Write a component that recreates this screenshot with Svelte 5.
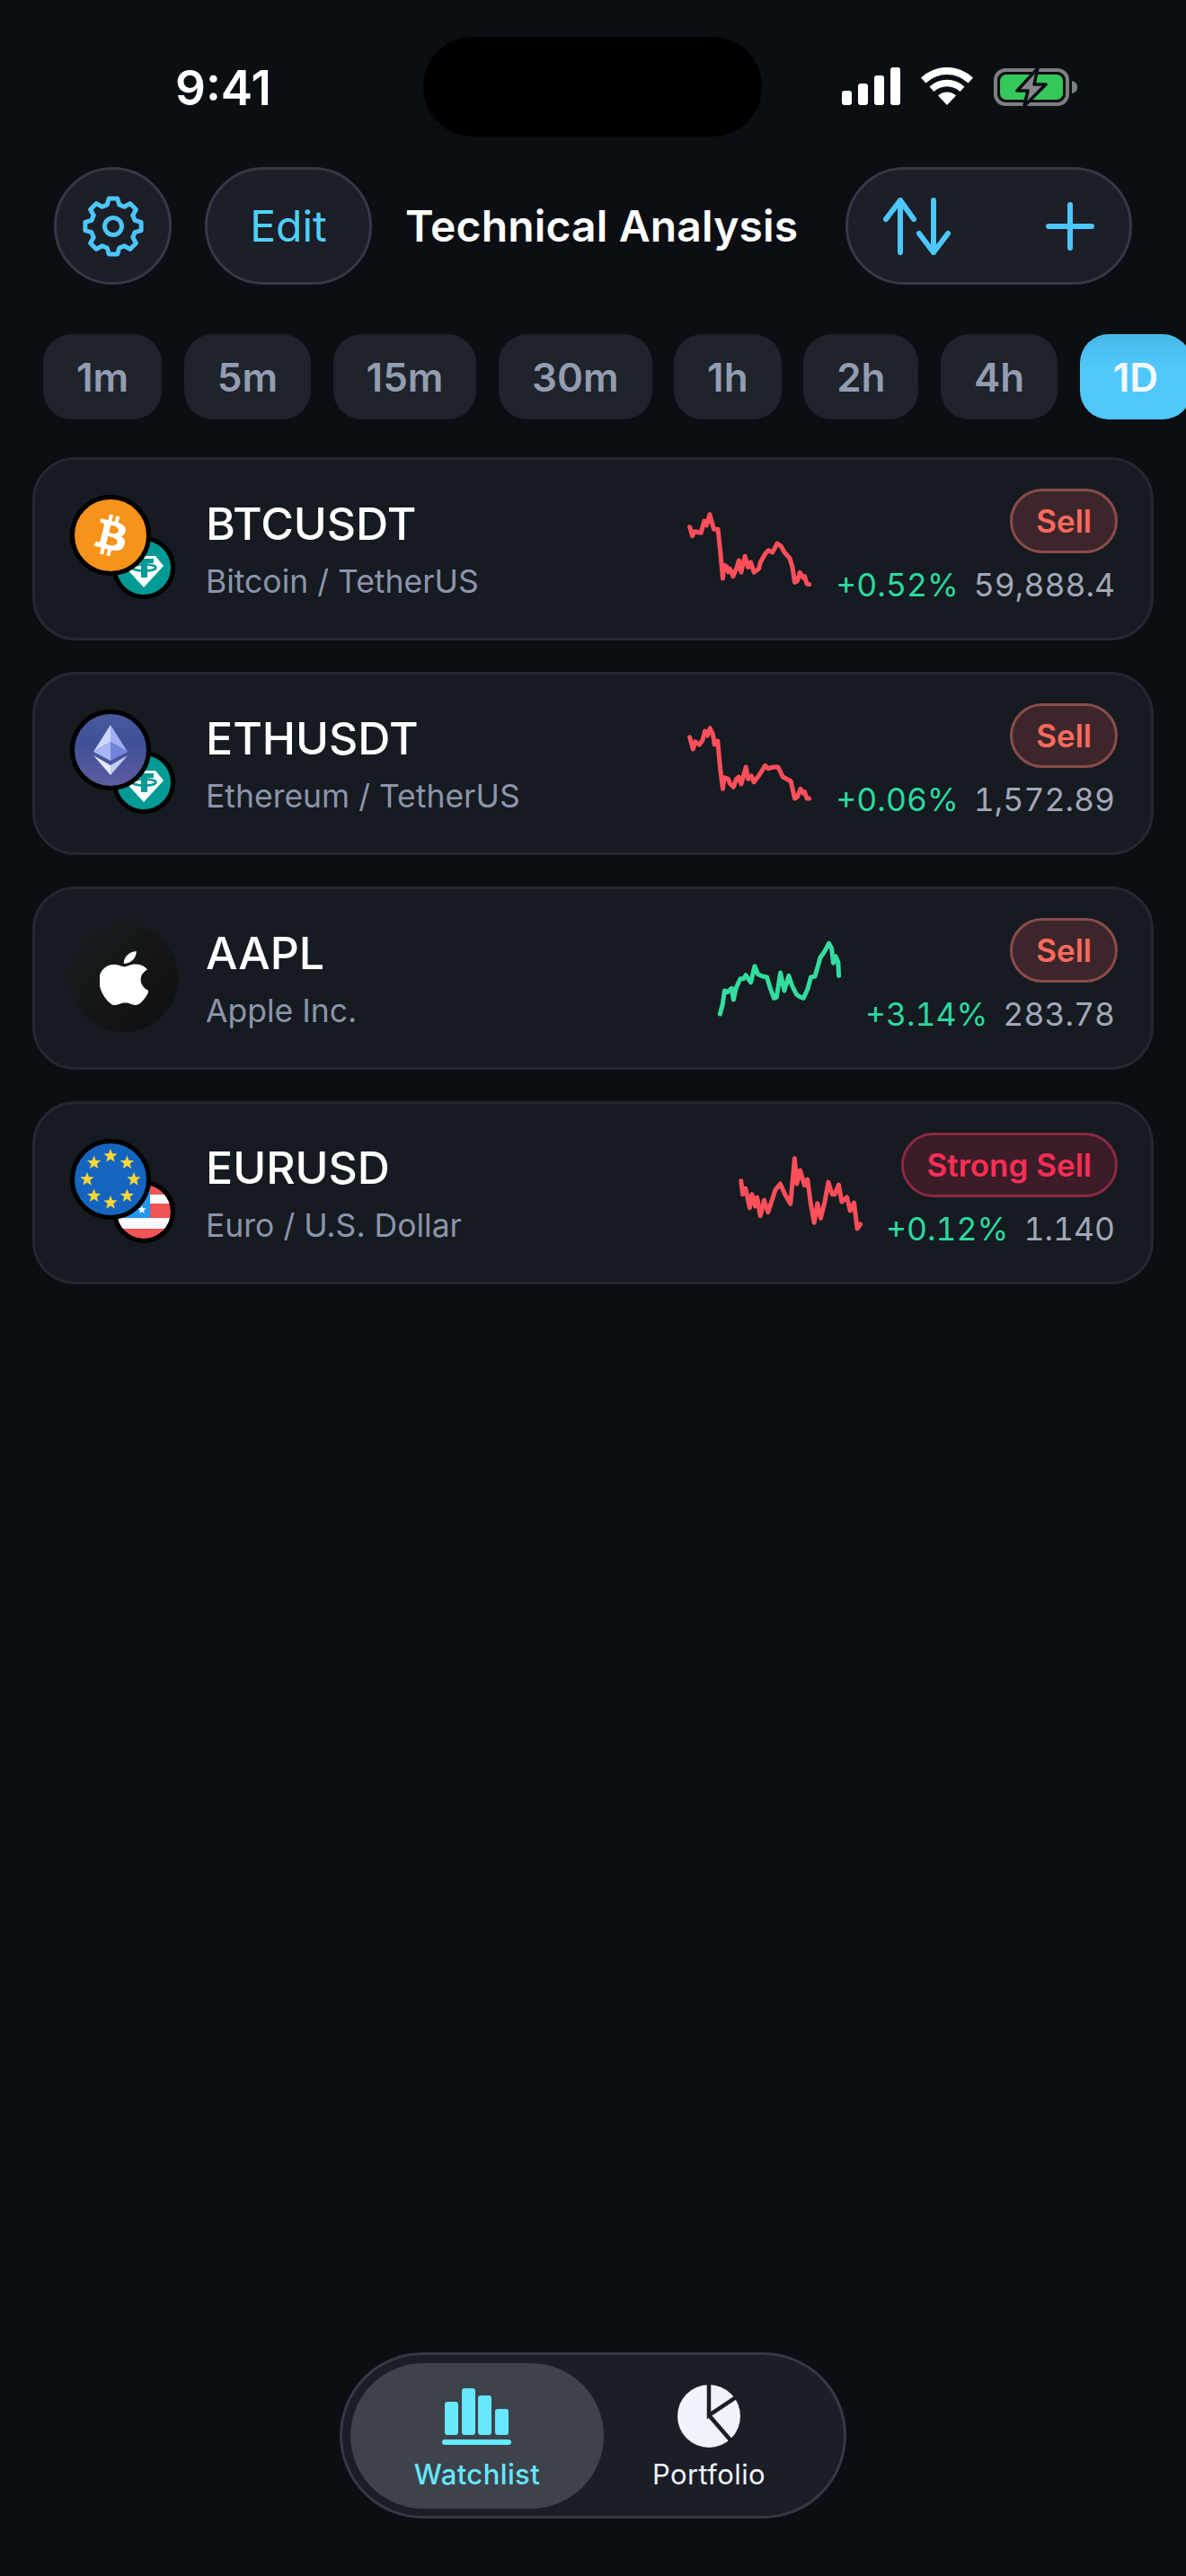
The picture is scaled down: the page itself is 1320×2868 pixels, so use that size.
<script>
	const frames = ['1m', '5m', '15m', '30m', '1h', '2h', '4h', '1D'];

	// sparkline points as traced, scaled down into the 136x84 box below
	const toPoints = (raw, ox, oy) =>
		raw.map(([x, y]) => `${((x - ox) / 2.8).toFixed(1)},${((y - oy) / 3).toFixed(1)}`).join(' ');

	const rows = [
		{
			sym: 'BTCUSDT', name: 'Bitcoin / TetherUS', icon: 'btc', tone: 'sell', signal: 'Sell', change: '+0.52%', price: '59,888.4', line: 'red',
			points: toPoints([[80,260],[88,290],[95,275],[115,280],[125,240],[132,255],[142,218],[155,268],[168,268],[175,340],[183,432],[186,388],[195,392],[200,410],[205,400],[215,425],[225,400],[233,372],[240,412],[252,358],[262,395],[270,378],[280,412],[295,400],[300,378],[315,350],[325,338],[338,345],[352,315],[365,325],[375,345],[392,365],[400,395],[407,445],[415,440],[423,412],[433,430],[438,425],[445,450],[452,452]], 78, 213)
		},
		{
			sym: 'ETHUSDT', name: 'Ethereum / TetherUS', icon: 'eth', tone: 'sell', signal: 'Sell', change: '+0.06%', price: '1,572.89', line: 'red',
			points: toPoints([[80,245],[90,285],[97,260],[110,270],[120,255],[127,225],[135,240],[143,215],[152,235],[157,270],[167,258],[175,350],[183,418],[187,380],[200,385],[205,400],[216,412],[225,385],[232,378],[240,402],[255,345],[262,385],[272,375],[280,395],[296,372],[315,340],[325,350],[340,345],[355,345],[370,378],[395,392],[407,450],[415,445],[425,418],[433,432],[438,428],[445,450],[452,450]], 78, 213)
		},
		{
			sym: 'AAPL', name: 'Apple Inc.', icon: 'aapl', tone: 'sell', signal: 'Sell', change: '+3.14%', price: '283.78', line: 'green',
			points: toPoints([[172,388],[180,355],[186,310],[195,315],[208,302],[214,340],[222,300],[235,270],[245,270],[252,258],[268,282],[280,228],[290,255],[305,262],[318,265],[328,300],[340,335],[348,332],[360,250],[372,310],[386,260],[395,290],[410,322],[420,330],[432,335],[445,305],[455,265],[468,262],[484,200],[497,180],[511,152],[520,170],[525,218],[532,195],[540,215],[542,260]], 168, 148)
		},
		{
			sym: 'EURUSD', name: 'Euro / U.S. Dollar', icon: 'eur', tone: 'strong', signal: 'Strong Sell', change: '+0.12%', price: '1.140', line: 'red',
			points: toPoints([[238,945],[243,990],[252,970],[265,1035],[272,990],[282,1030],[288,1000],[298,1062],[310,1010],[322,1050],[345,975],[360,955],[375,990],[392,1022],[405,870],[412,955],[422,910],[436,960],[445,940],[455,1020],[466,1085],[476,1020],[486,1070],[498,1020],[510,950],[522,990],[530,990],[542,958],[552,1015],[568,1000],[578,1045],[590,1018],[600,1105],[610,1090]], 233, 865)
		}
	];

	function gearPath() {
		let d = '';
		for (let i = 0; i < 8; i++) {
			const a = (i * Math.PI) / 4 - Math.PI / 2;
			const pts = [[25, -0.27], [31.5, -0.15], [31.5, 0.15], [25, 0.27]];
			for (const [r, da] of pts) {
				const x = 36 + r * Math.cos(a + da);
				const y = 36 + r * Math.sin(a + da);
				d += `${d ? 'L' : 'M'}${x.toFixed(1)} ${y.toFixed(1)}`;
			}
		}
		return d + 'Z';
	}

	function starPath(cx, cy, r) {
		let d = '';
		for (let i = 0; i < 10; i++) {
			const a = (i * Math.PI) / 5 - Math.PI / 2;
			const rr = i % 2 ? r * 0.42 : r;
			d += `${d ? 'L' : 'M'}${(cx + rr * Math.cos(a)).toFixed(1)} ${(cy + rr * Math.sin(a)).toFixed(1)}`;
		}
		return d + 'Z';
	}

	const euStars = Array.from({ length: 8 }, (_, i) => {
		const a = (i * Math.PI) / 4;
		return starPath(45 + 26 * Math.sin(a), 45 - 26 * Math.cos(a), 8);
	});
</script>

{#snippet tether()}
	<svg class="coin-b" viewBox="0 0 70 70">
		<circle cx="35" cy="35" r="32.5" fill="#029a94" stroke="#000" stroke-width="5" />
		<path d="M22 22H48L57 33L35 57L13 33Z" fill="#fff" />
		<path d="M32 26H39V46H32Z" fill="#029a94" />
		<path d="M26 25H46V30H26Z" fill="#029a94" />
		<ellipse cx="35.5" cy="35" rx="13" ry="3.5" fill="none" stroke="#029a94" stroke-width="2.5" />
	</svg>
{/snippet}

<div class="page">
	<div class="island"></div>

	<header class="status">
		<span class="time">9:41</span>
		<div class="status-icons">
			<svg width="65" height="42" viewBox="0 0 65 42" fill="#fff">
				<rect x="0" y="26" width="11" height="16" rx="3" />
				<rect x="18" y="18" width="11" height="24" rx="3" />
				<rect x="36" y="9" width="11" height="33" rx="3" />
				<rect x="54" y="0" width="11" height="42" rx="3" />
			</svg>
			<svg width="58" height="42" viewBox="0 0 58 42" fill="#fff">
				<path d="M29 42L19 31.5A14.5 14.5 0 0 1 39 31.5Z" />
				<path d="M14.5 27A21 21 0 0 1 43.5 27L48.5 21.5A28.5 28.5 0 0 0 9.5 21.5Z" />
				<path d="M5.5 17.5A34 34 0 0 1 52.5 17.5L58 11.5A42 42 0 0 0 0 11.5Z" />
			</svg>
			<svg width="94" height="44" viewBox="0 0 94 44">
				<rect x="2" y="3" width="80" height="38" rx="11" fill="none" stroke="#7d7e81" stroke-width="4" />
				<rect x="7" y="8" width="70" height="28" rx="7" fill="#34c759" />
				<path d="M87 15c4 1 6 3 6 7s-2 6-6 7Z" fill="#7d7e81" />
				<path d="M49 1L26 26H38L34 43L58 19H45Z" fill="#85868a" stroke="#0b0e13" stroke-width="3.5" stroke-linejoin="round" />
			</svg>
		</div>
	</header>

	<nav class="toolbar">
		<button class="gear">
			<svg width="72" height="72" viewBox="0 0 72 72" fill="none" stroke="#4cc6fb" stroke-width="5" stroke-linejoin="round">
				<path d={gearPath()} />
				<circle cx="36" cy="36" r="9.5" />
			</svg>
		</button>
		<button class="edit">Edit</button>
		<h1>Technical Analysis</h1>
		<div class="actions">
			<svg width="76" height="64" viewBox="0 0 76 64" fill="none" stroke="#4cc6fb" stroke-width="6" stroke-linecap="round" stroke-linejoin="round">
				<path d="M19 61V3M3 24L19 3L34 24" />
				<path d="M56 3V61M40 40L56 61L72 40" />
			</svg>
			<svg width="54" height="54" viewBox="0 0 54 54" fill="none" stroke="#4cc6fb" stroke-width="6" stroke-linecap="round">
				<path d="M27 3V51M3 27H51" />
			</svg>
		</div>
	</nav>

	<div class="frames">
		{#each frames as f}
			<button class="frame" class:active={f === '1D'}>{f}</button>
		{/each}
	</div>

	<section class="list">
		{#each rows as row}
			<article class="card">
				<div class="logo">
					{#if row.icon === 'btc'}
						{@render tether()}
						<svg class="coin-a" viewBox="0 0 90 90">
							<circle cx="45" cy="45" r="42.5" fill="#f7931a" stroke="#000" stroke-width="5" />
							<g transform="translate(7.5 7.5) scale(2.34)">
								<path fill="#fff" d="M23.189 14.02c.314-2.096-1.283-3.223-3.465-3.975l.708-2.84-1.728-.43-.69 2.765c-.454-.114-.92-.22-1.385-.326l.695-2.783L15.596 6l-.708 2.839c-.376-.086-.746-.17-1.104-.26l.002-.009-2.384-.595-.46 1.846s1.283.294 1.256.312c.7.175.826.638.805 1.006l-.806 3.235c.048.012.11.03.18.057l-.183-.045-1.13 4.532c-.086.212-.303.531-.793.41.018.025-1.256-.313-1.256-.313l-.858 1.978 2.25.561c.418.105.828.215 1.231.318l-.715 2.872 1.727.43.708-2.84c.472.127.93.245 1.378.357l-.706 2.828 1.728.43.715-2.866c2.948.558 5.164.333 6.097-2.333.752-2.146-.037-3.385-1.588-4.192 1.13-.26 1.98-1.003 2.207-2.538zm-3.95 5.538c-.533 2.147-4.148.986-5.32.695l.95-3.805c1.172.293 4.929.872 4.37 3.11zm.535-5.569c-.487 1.953-3.495.96-4.47.717l.86-3.45c.975.243 4.118.696 3.61 2.733z" />
							</g>
						</svg>
					{:else if row.icon === 'eth'}
						{@render tether()}
						<svg class="coin-a" viewBox="0 0 90 90">
							<defs>
								<linearGradient id="ethbg" x1="0" y1="0" x2="0" y2="1">
									<stop offset="0" stop-color="#4a5a9f" />
									<stop offset="0.4" stop-color="#3f5096" />
									<stop offset="1" stop-color="#5f5da1" />
								</linearGradient>
							</defs>
							<circle cx="45" cy="45" r="42.5" fill="url(#ethbg)" stroke="#000" stroke-width="5" />
							<path d="M45 17L26 47L45 36Z" fill="#cfd6fc" />
							<path d="M45 17L64 47L45 36Z" fill="#a3b0f2" />
							<path d="M45 36L26 47L45 57Z" fill="#a9b6f5" />
							<path d="M45 36L64 47L45 57Z" fill="#7285dc" />
							<path d="M26 51L45 62V73Z" fill="#e3e8ff" />
							<path d="M64 51L45 62V73Z" fill="#c3cdf9" />
						</svg>
					{:else if row.icon === 'aapl'}
						<div class="apple">
							<svg width="54" height="60" viewBox="2.5 0 19 24" preserveAspectRatio="none" fill="#fff">
								<path d="M12.152 6.896c-.948 0-2.415-1.078-3.96-1.04-2.04.027-3.91 1.183-4.961 3.014-2.117 3.675-.546 9.103 1.519 12.09 1.013 1.454 2.208 3.09 3.792 3.039 1.52-.065 2.09-.987 3.935-.987 1.831 0 2.35.987 3.96.948 1.637-.026 2.676-1.48 3.676-2.948 1.156-1.688 1.636-3.325 1.662-3.415-.039-.013-3.182-1.221-3.22-4.857-.026-3.04 2.48-4.494 2.597-4.559-1.429-2.09-3.623-2.324-4.39-2.376-2-.156-3.675 1.09-4.61 1.09zM15.53 3.83c.843-1.012 1.4-2.427 1.245-3.83-1.207.052-2.662.805-3.532 1.818-.78.896-1.454 2.338-1.273 3.714 1.338.104 2.715-.688 3.559-1.701" />
							</svg>
						</div>
					{:else}
						<svg class="coin-b" viewBox="0 0 70 70">
							<defs>
								<clipPath id="usclip"><circle cx="35" cy="35" r="30" /></clipPath>
							</defs>
							<g clip-path="url(#usclip)">
								<rect width="70" height="70" fill="#f05455" />
								<rect y="16" width="70" height="10" fill="#f8f9ff" />
								<rect y="42" width="70" height="12" fill="#f8f9ff" />
								<rect width="42" height="42" fill="#2196f3" />
								<path d={starPath(33, 33, 5)} fill="#fff" />
							</g>
							<circle cx="35" cy="35" r="32.5" fill="none" stroke="#000" stroke-width="5" />
						</svg>
						<svg class="coin-a" viewBox="0 0 90 90">
							<circle cx="45" cy="45" r="42.5" fill="#1565c0" stroke="#000" stroke-width="5" />
							{#each euStars as d}
								<path {d} fill="#fdd835" />
							{/each}
						</svg>
					{/if}
				</div>

				<div class="names">
					<div class="sym">{row.sym}</div>
					<div class="sub">{row.name}</div>
				</div>

				<svg class="spark" width="136" height="84" viewBox="0 0 136 84">
					<polyline points={row.points} class={row.line} />
				</svg>

				<div class="right">
					<span class="badge {row.tone}">{row.signal}</span>
					<div class="nums">
						<span class="change">{row.change}</span>
						<span class="price">{row.price}</span>
					</div>
				</div>
			</article>
		{/each}
	</section>

	<div class="tabbar">
		<button class="tab on">
			<svg width="78" height="64" viewBox="0 0 78 64" fill="#66e8ff">
				<rect x="3" y="15" width="15" height="37" rx="3" />
				<rect x="22" y="0" width="15" height="52" rx="3" />
				<rect x="40" y="8" width="15" height="44" rx="3" />
				<rect x="59" y="23" width="15" height="29" rx="3" />
				<rect x="0" y="57" width="77" height="6" rx="3" />
			</svg>
			<span>Watchlist</span>
		</button>
		<button class="tab second">
			<svg class="pie" width="72" height="70" viewBox="0 0 72 70">
				<circle cx="36" cy="35" r="35" fill="#f0f3fc" />
				<path d="M36 -2V34L72 10M36 34L62 64" fill="none" stroke="#1b1e26" stroke-width="4.5" />
			</svg>
			<span>Portfolio</span>
		</button>
	</div>
</div>

<style>
	:global(body) {
		margin: 0;
		background: #0b0e13;
	}

	.page {
		position: relative;
		width: 1320px;
		height: 2868px;
		overflow: hidden;
		display: flex;
		flex-direction: column;
		background: #0b0e13;
		font-family: Inter, 'Liberation Sans', sans-serif;
		color: #fff;
	}

	button {
		font-family: inherit;
		border: none;
		padding: 0;
	}

	.island {
		position: absolute;
		left: 471px;
		top: 41px;
		width: 377px;
		height: 111px;
		border-radius: 56px;
		background: #000;
	}

	.status {
		height: 186px;
		box-sizing: border-box;
		display: flex;
		justify-content: space-between;
		padding: 0 120px 0 195px;
	}

	.time {
		margin-top: 68px;
		font-size: 53px;
		line-height: 60px;
		font-weight: 600;
	}

	.status-icons {
		display: flex;
		align-items: flex-start;
		gap: 23px;
		padding-top: 75px;
	}

	.toolbar {
		display: flex;
		align-items: center;
		padding: 0 60px;
	}

	.gear,
	.edit,
	.actions {
		height: 131px;
		box-sizing: border-box;
		background: #1c1f27;
		border: 3px solid #333a47;
		border-radius: 66px;
	}

	.gear {
		width: 131px;
		display: flex;
		align-items: center;
		justify-content: center;
	}

	.edit {
		width: 186px;
		margin-left: 37px;
		font-size: 48px;
		color: #4fd1fb;
	}

	h1 {
		margin: 0 0 0 37px;
		font-size: 48px;
		font-weight: 600;
		letter-spacing: 0.15px;
	}

	.actions {
		width: 319px;
		margin-left: auto;
		display: flex;
		align-items: center;
		justify-content: space-between;
		padding: 0 39px;
	}

	.frames {
		display: flex;
		gap: 24.5px;
		margin-top: 55px;
		padding-left: 48px;
	}

	.frame {
		height: 95px;
		flex: none;
		padding: 0 37px;
		border-radius: 32px;
		background: #1e232c;
		color: #939cb0;
		font-size: 44px;
		font-weight: 600;
	}

	.frame.active {
		background: linear-gradient(#47b8e6, #4fc8fc 40%);
		color: #f5f8fb;
	}

	.list {
		display: flex;
		flex-direction: column;
		gap: 35px;
		margin: 42px 36px 0;
	}

	.card {
		height: 204px;
		box-sizing: border-box;
		display: flex;
		align-items: center;
		padding: 0 37px 0 39px;
		background: #161a21;
		border: 3px solid #24282f;
		border-radius: 48px;
	}

	.logo {
		position: relative;
		width: 120px;
		height: 120px;
		flex: none;
	}

	.coin-a {
		position: absolute;
		left: 0;
		top: 0;
		width: 90px;
		height: 90px;
	}

	.coin-b {
		position: absolute;
		left: 47px;
		top: 46px;
		width: 70px;
		height: 70px;
	}

	.apple {
		width: 120px;
		height: 120px;
		border-radius: 50%;
		display: flex;
		align-items: center;
		justify-content: center;
		background: linear-gradient(135deg, #1a1d1f, #0d0e0f);
	}

	.names {
		margin-left: 31px;
	}

	.sym {
		font-size: 50px;
		line-height: 60px;
		font-weight: 500;
	}

	.sub {
		margin-top: 13px;
		font-size: 35.5px;
		line-height: 44px;
		color: #8c95aa;
	}

	.spark {
		flex: none;
		align-self: flex-start;
		margin: 59px 27px 0 auto;
		overflow: visible;
	}

	.spark polyline {
		fill: none;
		stroke-width: 5;
		stroke-linejoin: round;
		stroke-linecap: round;
	}

	.spark .red {
		stroke: #ff4f5a;
	}

	.spark .green {
		stroke: #33dd9f;
	}

	.right {
		display: flex;
		flex-direction: column;
		align-items: flex-end;
		gap: 14px;
		padding-bottom: 4px;
	}

	.badge {
		height: 72px;
		box-sizing: border-box;
		padding: 0 26px;
		display: flex;
		align-items: center;
		border-radius: 36px;
		border: 3px solid;
		font-size: 35px;
		font-weight: 600;
	}

	.badge.sell {
		color: #fd6a5e;
		background: #3d262b;
		border-color: #8a4c49;
	}

	.badge.strong {
		color: #ff2e55;
		background: #3b1c28;
		border-color: #8c2a40;
	}

	.nums {
		display: flex;
		gap: 17px;
		padding-right: 3px;
		font-size: 35.5px;
		line-height: 44px;
		font-variant-numeric: tabular-nums;
	}

	.change {
		color: #2bd99f;
	}

	.price {
		color: #a2a7b7;
	}

	.tabbar {
		align-self: center;
		margin-top: auto;
		margin-bottom: 64px;
		width: 564px;
		height: 185px;
		box-sizing: border-box;
		display: flex;
		align-items: center;
		padding: 0 9px;
		background: #1b1e26;
		border: 3px solid #333a47;
		border-radius: 93px;
	}

	.tab {
		width: 282px;
		height: 162px;
		flex: none;
		display: flex;
		flex-direction: column;
		align-items: center;
		justify-content: flex-end;
		gap: 14px;
		padding-bottom: 20px;
		box-sizing: border-box;
		border-radius: 81px;
		background: transparent;
		color: #f0f3fc;
		font-size: 31px;
		font-weight: 500;
		line-height: 36px;
		letter-spacing: 0.4px;
	}

	.tab.second {
		flex: 1;
		padding-right: 24px;
		font-weight: 400;
	}

	.pie {
		margin-bottom: -2px;
	}

	.tab.on {
		background: #3e424b;
		color: #66e8ff;
	}
</style>
